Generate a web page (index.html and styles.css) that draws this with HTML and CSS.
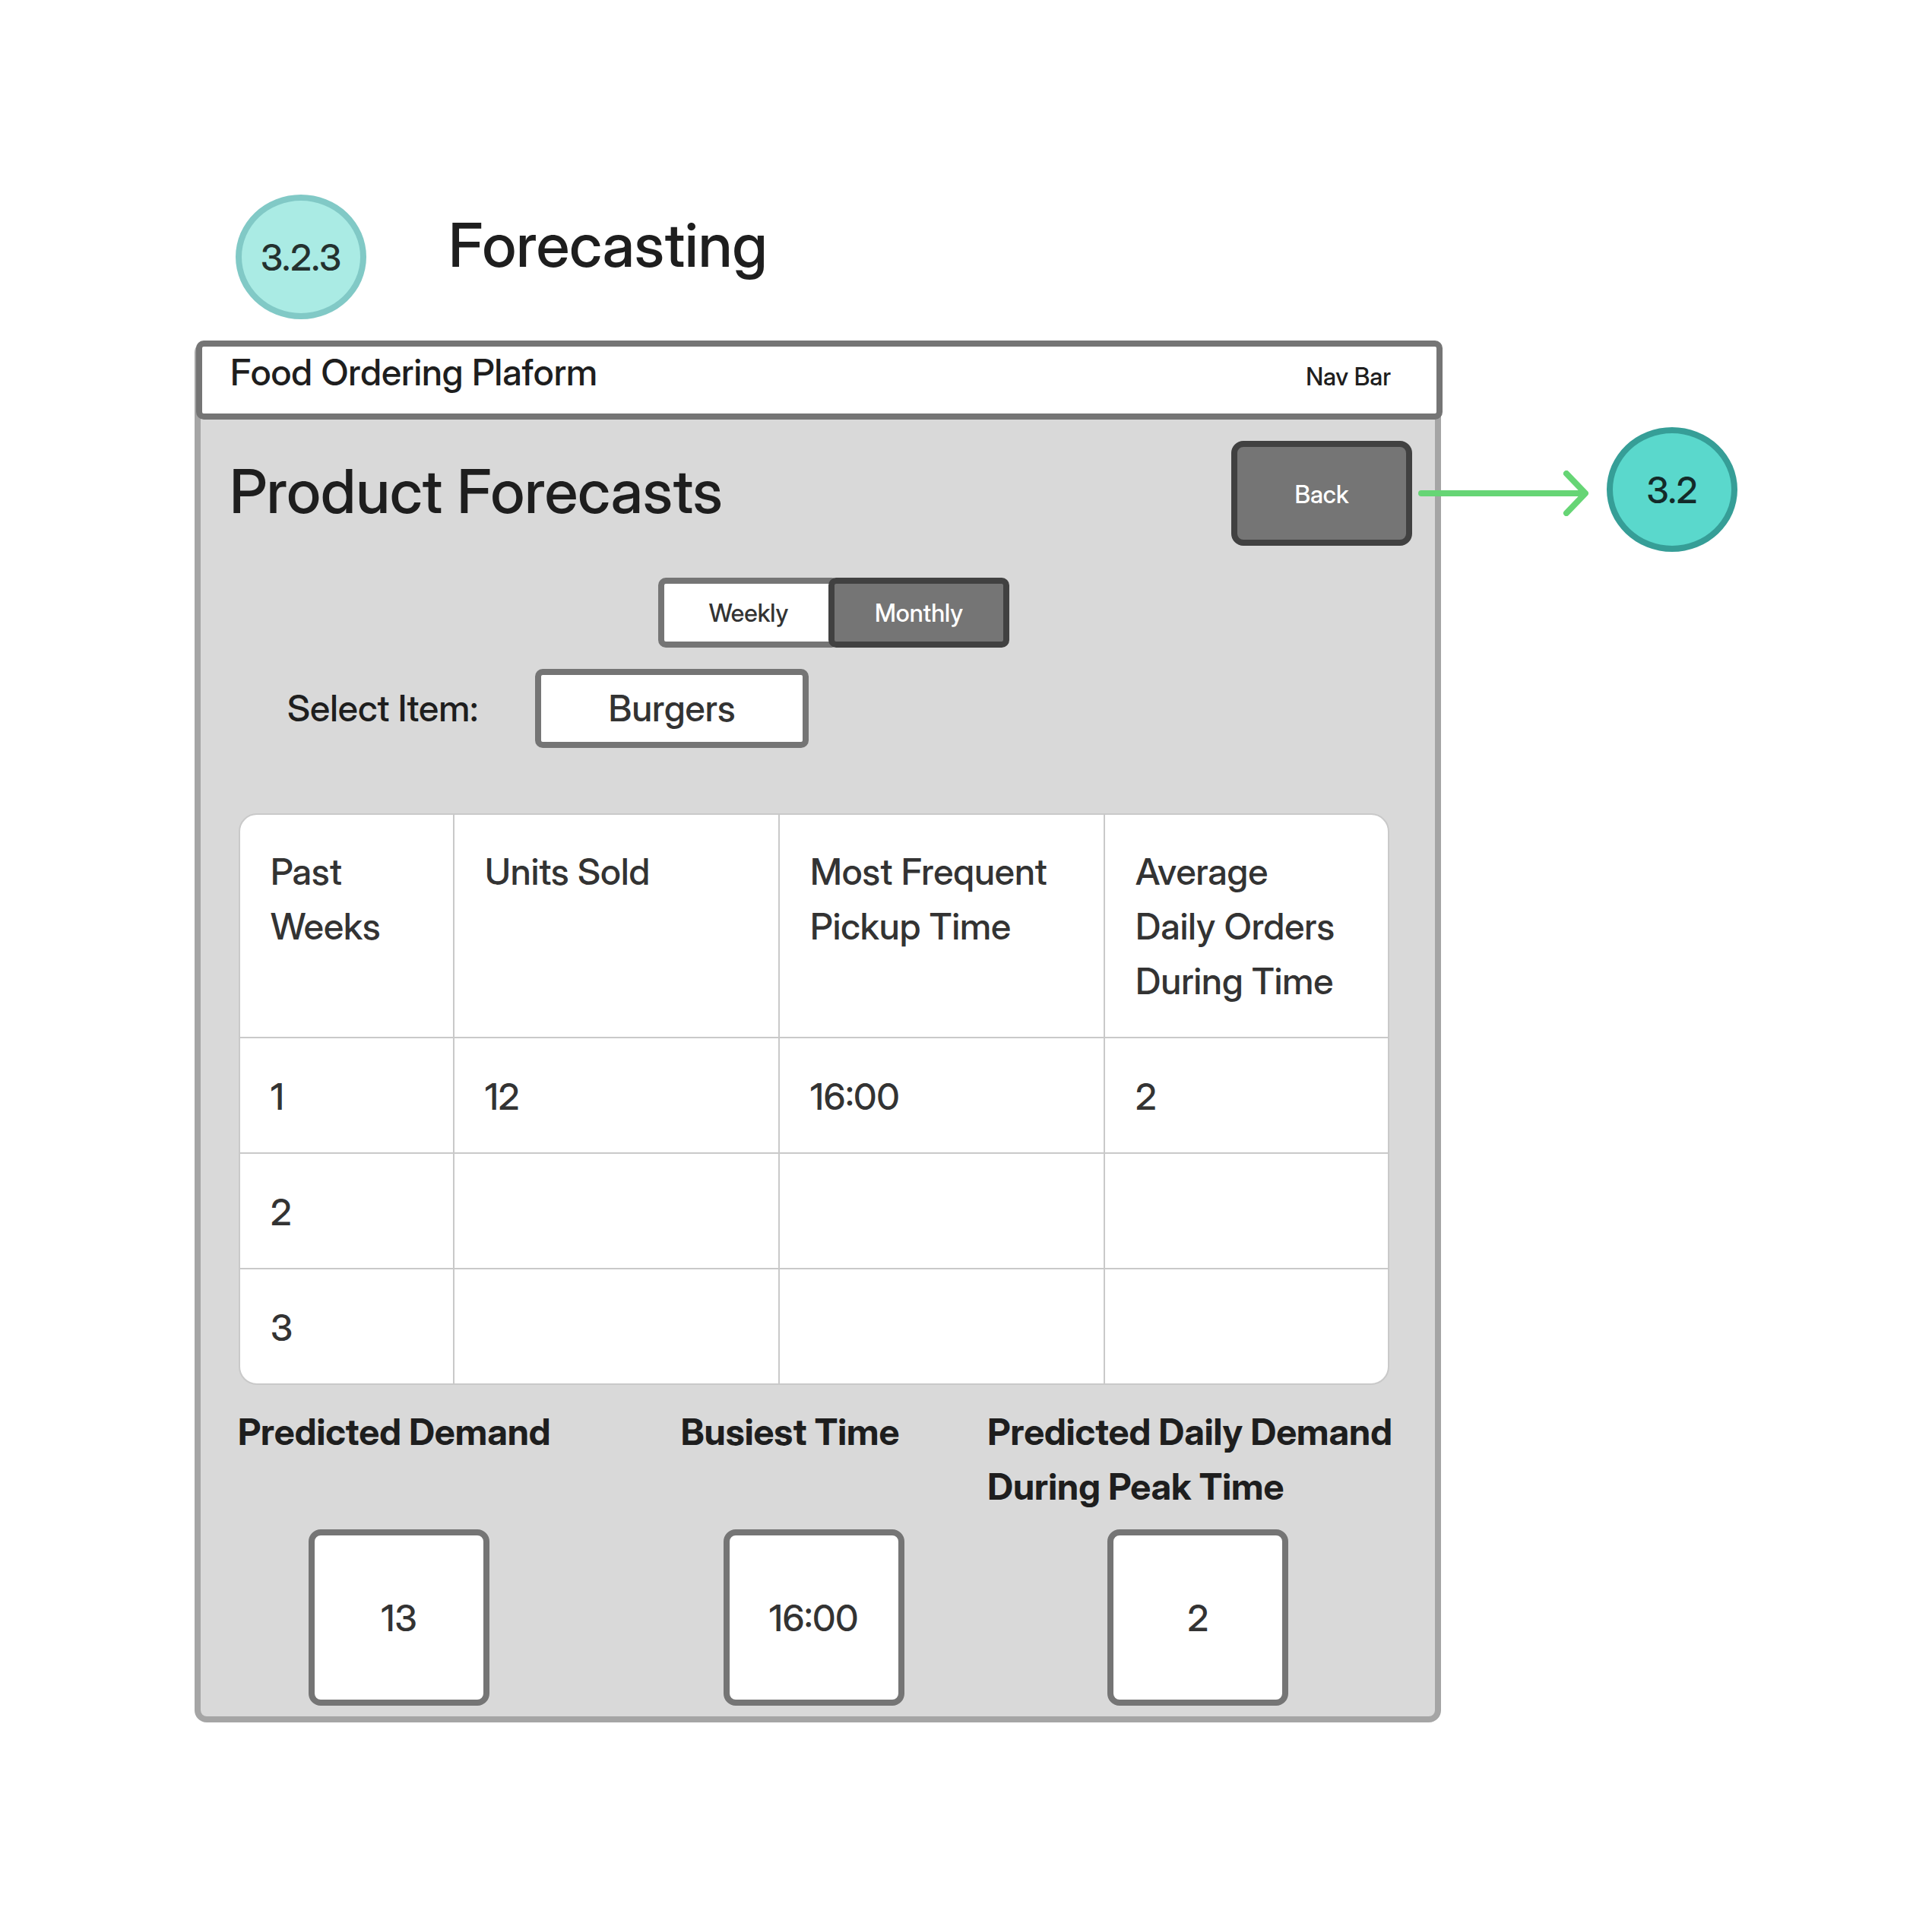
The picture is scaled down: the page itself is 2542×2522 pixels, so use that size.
FILE: index.html
```html
<!DOCTYPE html>
<html lang="en">
<head>
<meta charset="utf-8">
<meta name="viewport" content="width=device-width, initial-scale=1">
<title>Forecasting</title>
<link rel="stylesheet" href="styles.css">
</head>
<body>
<main class="board">
  <header class="board-head">
    <span class="node node-light">3.2.3</span>
    <h1 class="title">Forecasting</h1>
  </header>
  <div class="flow">
    <section class="panel">
      <nav class="navbar">
        <span class="brand">Food Ordering Plaform</span>
        <span class="nav-label">Nav Bar</span>
      </nav>
      <div class="heading-row">
        <h2 class="title">Product Forecasts</h2>
        <button type="button" class="back">Back</button>
      </div>
      <div class="toggle">
        <button type="button" class="option" aria-pressed="false">Weekly</button>
        <button type="button" class="option option-on" aria-pressed="true">Monthly</button>
      </div>
      <div class="picker">
        <label class="picker-label" for="item">Select Item:</label>
        <select class="picker-box" id="item"><option>Burgers</option></select>
      </div>
      <div class="history">
        <table class="history-table">
          <colgroup><col class="col-week"><col class="col-wide"><col class="col-wide"><col></colgroup>
          <thead>
            <tr><th scope="col">Past Weeks</th><th scope="col">Units Sold</th><th scope="col">Most Frequent Pickup Time</th><th scope="col">Average Daily Orders During Time</th></tr>
          </thead>
          <tbody>
            <tr><td>1</td><td>12</td><td>16:00</td><td>2</td></tr>
            <tr><td>2</td><td></td><td></td><td></td></tr>
            <tr><td>3</td><td></td><td></td><td></td></tr>
          </tbody>
        </table>
      </div>
      <div class="summary">
        <div class="stat stat-demand">
          <h3 class="stat-name">Predicted Demand</h3>
          <div class="stat-value">13</div>
        </div>
        <div class="stat stat-time">
          <h3 class="stat-name">Busiest Time</h3>
          <div class="stat-value">16:00</div>
        </div>
        <div class="stat stat-peak">
          <h3 class="stat-name">Predicted Daily Demand<br>During Peak Time</h3>
          <div class="stat-value">2</div>
        </div>
      </div>
    </section>
    <aside class="link-out">
      <svg class="arrow" viewBox="0 0 224 60" aria-hidden="true"><path d="M4 30H219M195 4L220 30L195 56"/></svg>
      <span class="node">3.2</span>
    </aside>
  </div>
</main>
</body>
</html>
```
FILE: styles.css
```css
* {
  box-sizing: border-box;
}

body {
  margin: 0;
  background: #fff;
  color: #1e1e1e;
  font-family: "Inter Display", Inter, "Liberation Sans", sans-serif;
  font-size: 48px;
  font-weight: 500;
  line-height: 72px;
}

h1, h2, h3 {
  margin: 0;
}

button, select {
  font: inherit;
  margin: 0;
  padding: 0;
}

.board {
  padding: 256px;
}

.board-head {
  display: flex;
  gap: 108px;
  padding: 0 54px 28px;
}

.title {
  font-size: 80px;
  font-weight: 500;
  line-height: 132px;
}

.node {
  display: flex;
  flex: none;
  align-items: center;
  justify-content: center;
  width: 172px;
  height: 164px;
  padding-top: 2px;
  border: 8px solid #369e97;
  border-radius: 50%;
  background: #5ad8cc;
  color: #132a29;
}

.node-light {
  border-color: #81c9c6;
  background: #aaebe4;
  color: #24312f;
}

.flow {
  display: grid;
  grid-template-columns: minmax(0, 1fr) 390px;
}

.panel {
  border: 8px solid #a5a5a5;
  border-radius: 16px;
  background: #d9d9d9;
  padding-bottom: 14px;
}

.navbar {
  display: flex;
  align-items: baseline;
  justify-content: space-between;
  height: 104px;
  margin: -8px -10px 0 -6px;
  padding: 0 60px 0 37px;
  border: 8px solid #757575;
  border-radius: 10px;
  background: #fff;
  line-height: 68px;
}

.nav-label {
  font-size: 32px;
}

.heading-row {
  display: flex;
  justify-content: space-between;
  padding: 28px 30px 0 38px;
}

.back {
  width: 238px;
  height: 138px;
  padding-top: 4px;
  border: 8px solid #414141;
  border-radius: 16px;
  background: #757575;
  color: #fff;
  font-size: 32px;
}

.toggle {
  display: flex;
  margin: 42px 0 28px 602px;
}

.option {
  width: 238px;
  height: 92px;
  padding-top: 2px;
  border: 8px solid #757575;
  border-radius: 10px;
  background: #fff;
  color: #333;
  font-size: 32px;
}

.option-on {
  margin-left: -14px;
  border-color: #414141;
  background: #757575;
  color: #fff;
}

.picker {
  display: flex;
  align-items: center;
  padding-left: 114px;
}

.picker-label {
  width: 326px;
}

.picker-box {
  appearance: none;
  width: 360px;
  height: 104px;
  border: 8px solid #757575;
  border-radius: 10px;
  background: #fff;
  color: #333;
  text-align: center;
  text-align-last: center;
}

.history {
  margin: 86px 60px 0 50px;
  border: 2px solid #c9c9c9;
  border-radius: 24px;
  background: #fff;
  overflow: hidden;
}

.history-table {
  width: 100%;
  table-layout: fixed;
  border-collapse: separate;
  border-spacing: 0;
  color: #333;
}

.col-week {
  width: 280px;
}

.col-wide {
  width: 428px;
}

.history-table th,
.history-table td {
  height: 152px;
  padding: 39px 48px 37px 40px;
  font-weight: 500;
  text-align: left;
  vertical-align: top;
}

.history-table td {
  padding-top: 41px;
  border-top: 2px solid #c9c9c9;
}

.history-table th + th,
.history-table td + td {
  border-left: 2px solid #c9c9c9;
}

.summary {
  display: grid;
  grid-template-columns: 583fr 404fr 589fr;
  padding: 26px 0 0 49px;
}

.stat {
  display: flex;
  flex-direction: column;
  justify-content: space-between;
  gap: 20px;
}

.stat-name {
  font-size: 48px;
  font-weight: 700;
  white-space: nowrap;
}

.stat-value {
  display: flex;
  align-items: center;
  justify-content: center;
  width: 238px;
  height: 232px;
  padding-top: 2px;
  border: 8px solid #757575;
  border-radius: 16px;
  background: #fff;
  color: #333;
}

.stat-demand .stat-value {
  margin-left: 93px;
}

.stat-time .stat-value {
  margin-left: 56px;
}

.stat-peak .stat-value {
  margin-left: 158px;
}

.link-out {
  display: flex;
  align-items: flex-start;
  gap: 24px;
  margin: 114px 0 0 -30px;
}

.arrow {
  flex: none;
  width: 224px;
  height: 60px;
  margin-top: 57px;
  fill: none;
  stroke: #66d575;
  stroke-width: 8;
  stroke-linecap: round;
  stroke-linejoin: round;
}
```
